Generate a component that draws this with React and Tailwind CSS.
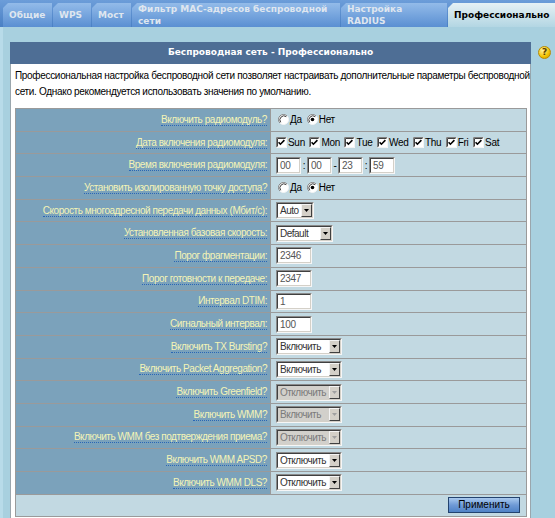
import React from "react";

const ARIAL = "font-['Liberation_Sans',Arial,sans-serif]";
const VERD = "font-['DejaVu_Sans',Verdana,sans-serif]";

function Tab({ w, lines, active }) {
  return (
    <div
      className={`${w} h-[24px] shrink-0 flex flex-col justify-center pl-[6px] ${VERD} font-bold text-[9px] leading-[12px] [clip-path:polygon(0_5px,5px_0,100%_0,100%_100%,0_100%)] ${
        active
          ? "bg-gradient-to-b from-[#e6f1f5] to-[#b3d6e3] text-black"
          : "bg-gradient-to-b from-[#93bbe9] to-[#5a8fd2] text-[#dfe6ef]"
      }`}
    >
      {lines.map((l, i) => (
        <span key={i} className="whitespace-nowrap">
          {l}
        </span>
      ))}
    </div>
  );
}

function Radio({ checked }) {
  return (
    <svg width="11" height="11" viewBox="0 0 11 11" className="shrink-0">
      <circle cx="5.5" cy="5.5" r="5" fill="#fff" />
      <path d="M1.96 9.04 A5 5 0 0 1 9.04 1.96" fill="none" stroke="#808080" strokeWidth="1" />
      <path d="M2.7 8.3 A4 4 0 0 1 8.3 2.7" fill="none" stroke="#404040" strokeWidth="1" />
      <path d="M9.04 1.96 A5 5 0 0 1 1.96 9.04" fill="none" stroke="#f4f4f4" strokeWidth="1" />
      {checked && <circle cx="5.5" cy="5.5" r="1.8" fill="#000" />}
    </svg>
  );
}

function Check() {
  return (
    <svg width="11" height="11" viewBox="0 0 11 11" className="shrink-0">
      <rect x="0" y="0" width="11" height="11" fill="#fff" />
      <path d="M0.5 10.5V0.5H10.5" fill="none" stroke="#808080" />
      <path d="M1.5 9.5V1.5H9.5" fill="none" stroke="#404040" />
      <path d="M0.5 10.5H10.5V0.5" fill="none" stroke="#f4f4f4" />
      <path d="M2.6 5.2 L4.4 7.2 L8.4 3.1" fill="none" stroke="#000" strokeWidth="1.6" />
    </svg>
  );
}

function Inset({ w, bg, children }) {
  return (
    <div
      className={`${w} h-[17px] shrink-0 flex border border-t-[#8a8a8a] border-l-[#8a8a8a] border-b-[#f6f6f6] border-r-[#f6f6f6]`}
    >
      <div
        className={`flex-1 min-w-0 flex border border-t-[#404040] border-l-[#404040] border-b-[#d4d0c8] border-r-[#d4d0c8] ${bg}`}
      >
        {children}
      </div>
    </div>
  );
}

function TextIn({ w, value }) {
  return (
    <Inset w={w} bg="bg-white">
      <span className={`pl-[2px] ${ARIAL} text-[10px] tracking-[-0.3px] leading-[13px] text-[#555]`}>{value}</span>
    </Inset>
  );
}

function Sel({ w, value, disabled }) {
  return (
    <Inset w={w} bg={disabled ? "bg-[#d2d0cb]" : "bg-white"}>
      <span
        className={`flex-1 pl-[2px] ${ARIAL} text-[10px] tracking-[-0.5px] leading-[13px] whitespace-nowrap overflow-hidden ${
          disabled ? "text-[#7a7a7a]" : "text-[#333]"
        }`}
      >
        {value}
      </span>
      <span className="w-[11px] h-[13px] shrink-0 flex items-center justify-center bg-[#d4d0c8] border border-t-[#f4f4f4] border-l-[#f4f4f4] border-b-[#404040] border-r-[#404040]">
        <svg width="5" height="3" viewBox="0 0 5 3">
          <path d="M0 0H5L2.5 3Z" fill={disabled ? "#a0a0a0" : "#000"} />
        </svg>
      </span>
    </Inset>
  );
}

function Row({ label, children }) {
  return (
    <div className="grid grid-cols-[255px_1fr] h-[22.7px] border-b border-[#9a9a9a]">
      <div className="bg-[#7ba2bb] border-r border-[#9a9a9a] flex items-center justify-end pr-[3px]">
        <span
          className={`${ARIAL} text-[10px] tracking-[-0.44px] leading-[11px] text-[#f4f4b6] border-b border-dotted border-[#2a67b6] whitespace-nowrap`}
        >
          {label}
        </span>
      </div>
      <div className={`bg-[#c2d9e2] flex items-center pl-[5px] ${ARIAL} text-[10px] tracking-[-0.3px] text-black`}>
        {children}
      </div>
    </div>
  );
}

function Radios() {
  return (
    <div className="flex items-center pl-[2px]">
      <Radio />
      <span className="ml-[1px] mr-[5px]">Да</span>
      <Radio checked />
      <span className="ml-[1px]">Нет</span>
    </div>
  );
}

const days = ["Sun", "Mon", "Tue", "Wed", "Thu", "Fri", "Sat"];

export default function App() {
  return (
    <div className="w-[555px] h-[518px] overflow-hidden bg-[#a8d0df] flex flex-col">
      <div className="h-[27px] shrink-0 flex items-end gap-[1px] pl-[3px] bg-gradient-to-b from-[#6c9dd9] to-[#4a80c4]">
        <Tab w="w-[49px]" lines={["Общие"]} />
        <Tab w="w-[38px]" lines={["WPS"]} />
        <Tab w="w-[39px]" lines={["Мост"]} />
        <Tab w="w-[208px]" lines={["Фильтр MAC-адресов беспроводной", "сети"]} />
        <Tab w="w-[106px]" lines={["Настройка", "RADIUS"]} />
        <Tab w="w-[110px]" lines={["Профессионально"]} active />
      </div>
      <div className="flex flex-1 min-h-0">
        <div className="w-[10px] shrink-0 flex">
          <div className="w-[3px] bg-[#b8dbe9]" />
        </div>
        <div className="w-[521px] shrink-0 mt-[15px] flex flex-col">
          <div
            className={`h-[22px] shrink-0 bg-[#4e6e95] flex items-center justify-center ${VERD} font-bold text-[9px] text-white`}
          >
            Беспроводная сеть - Профессионально
          </div>
          <div className="flex-1 bg-white border-l border-r border-[#9aa6ad] pl-[4px] pr-[3px]">
            <p className={`pt-[4px] ${ARIAL} text-[10px] tracking-[-0.32px] leading-[16px] text-black whitespace-nowrap`}>
              Профессиональная настройка беспроводной сети позволяет настраивать дополнительные параметры беспроводной
              <br />
              сети. Однако рекомендуется использовать значения по умолчанию.
            </p>
            <div className="mt-[8px] border border-b-0 border-[#9a9a9a]">
              <Row label="Включить радиомодуль?">
                <Radios />
              </Row>
              <Row label="Дата включения радиомодуля:">
                <div className="flex items-center">
                  {days.map((d) => (
                    <React.Fragment key={d}>
                      <Check />
                      <span className="ml-[1px] mr-[4.5px]">{d}</span>
                    </React.Fragment>
                  ))}
                </div>
              </Row>
              <Row label="Время включения радиомодуля:">
                <div className="flex items-center">
                  <TextIn w="w-[25px]" value="00" />
                  <span className="w-[6px] text-center">:</span>
                  <TextIn w="w-[25px]" value="00" />
                  <span className="w-[6px] text-center">-</span>
                  <TextIn w="w-[25px]" value="23" />
                  <span className="w-[6px] text-center">:</span>
                  <TextIn w="w-[26px]" value="59" />
                </div>
              </Row>
              <Row label="Установить изолированную точку доступа?">
                <Radios />
              </Row>
              <Row label="Скорость многоадресной передачи данных (Мбит/с):">
                <Sel w="w-[38px]" value="Auto" />
              </Row>
              <Row label="Установленная базовая скорость:">
                <Sel w="w-[57px]" value="Default" />
              </Row>
              <Row label="Порог фрагментации:">
                <TextIn w="w-[36px]" value="2346" />
              </Row>
              <Row label="Порог готовности к передаче:">
                <TextIn w="w-[36px]" value="2347" />
              </Row>
              <Row label="Интервал DTIM:">
                <TextIn w="w-[36px]" value="1" />
              </Row>
              <Row label="Сигнальный интервал:">
                <TextIn w="w-[36px]" value="100" />
              </Row>
              <Row label="Включить TX Bursting?">
                <Sel w="w-[66px]" value="Включить" />
              </Row>
              <Row label="Включить Packet Aggregation?">
                <Sel w="w-[66px]" value="Включить" />
              </Row>
              <Row label="Включить Greenfield?">
                <Sel w="w-[66px]" value="Отключить" disabled />
              </Row>
              <Row label="Включить WMM?">
                <Sel w="w-[66px]" value="Включить" disabled />
              </Row>
              <Row label="Включить WMM без подтверждения приема?">
                <Sel w="w-[66px]" value="Отключить" disabled />
              </Row>
              <Row label="Включить WMM APSD?">
                <Sel w="w-[66px]" value="Отключить" />
              </Row>
              <Row label="Включить WMM DLS?">
                <Sel w="w-[66px]" value="Отключить" />
              </Row>
              <div className="h-[22px] bg-[#c2d9e2] border-b border-[#9a9a9a] flex items-center justify-end pr-[6px]">
                <button
                  className={`w-[72px] h-[16px] border border-[#23436f] bg-gradient-to-b from-[#a9c9ee] via-[#6f9ad6] to-[#4f82c6] ${ARIAL} text-[10px] leading-[14px] text-black`}
                >
                  Применить
                </button>
              </div>
            </div>
          </div>
        </div>
        <div className="flex-1 pl-[7px] pt-[19px]">
          <div className="w-[13px] h-[13px] rounded-full border border-[#b98a00] bg-[radial-gradient(circle_at_35%_30%,#fff3a0,#f2c200_60%,#c99400)] flex items-center justify-center">
            <span className={`${VERD} font-bold text-[9px] leading-[9px] text-[#5a3f00]`}>?</span>
          </div>
        </div>
      </div>
    </div>
  );
}
